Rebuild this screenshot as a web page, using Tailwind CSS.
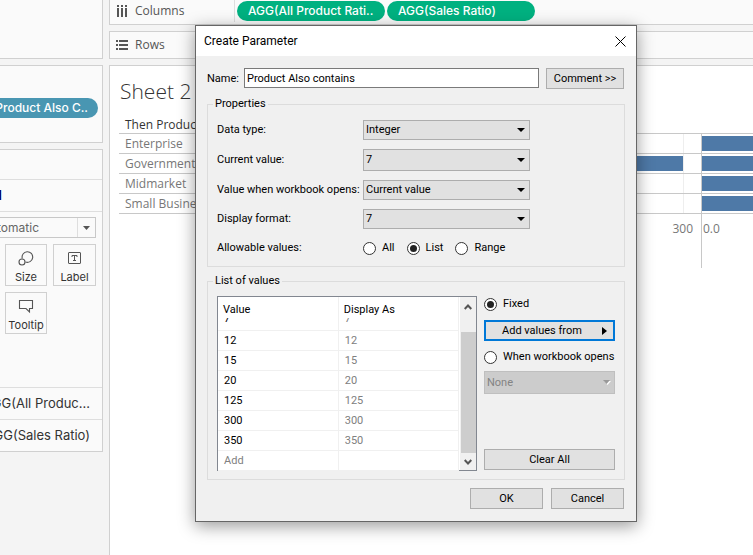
<!DOCTYPE html>
<html lang="en">
<head>
<meta charset="utf-8">
<title>Create Parameter</title>
<script src="https://cdn.jsdelivr.net/npm/@tailwindcss/browser@4"></script>
</head>
<body class="h-screen overflow-hidden bg-[#f4f4f4] font-['Open_Sans',sans-serif] text-[#333]">
<div class="flex h-full gap-1.5">
  <aside class="flex w-[103px] shrink-0 flex-col gap-1.5 overflow-hidden">
    <section class="h-[59px] shrink-0 border-r border-b border-[#d0d0d0] bg-[#fafafa]"></section>
    <section class="flex h-[78px] shrink-0 items-start justify-end border-y border-r border-[#d0d0d0] bg-[#fafafa] pt-8 pr-1">
      <button class="flex h-5 w-[120px] shrink-0 items-center justify-end rounded-full bg-[#4996b2] pr-2.5 font-['Inter',sans-serif] text-[12px] font-medium whitespace-nowrap text-white">Product Also C..</button>
    </section>
    <section class="flex shrink-0 flex-col border-y border-r border-[#d0d0d0] bg-[#fafafa] font-['Inter',sans-serif]">
      <div class="h-[30px] border-b border-[#dedede]"></div>
      <button class="flex h-8 items-center justify-end border-b border-[#dedede] pr-[100px] text-[13px] font-semibold whitespace-nowrap text-[#000060]">All</button>
      <div class="flex h-[175px] flex-col items-end gap-1.5 pt-[5px] pr-1.5">
        <button aria-label="Mark type" class="flex h-[21px] w-[120px] shrink-0 items-stretch justify-end border border-[#c8c8c8] text-[12px] text-[#666]">
          <span class="flex items-center pr-[38px] whitespace-nowrap">Automatic</span>
          <span class="flex w-[18px] shrink-0 items-center justify-center border-l border-[#dedede]"><svg class="h-1 w-[7px]" viewBox="0 0 7 4" fill="#555"><path d="M0 0h7L3.5 4z"/></svg></span>
        </button>
        <div class="grid grid-cols-[42px_43px] gap-x-1.5 gap-y-1.5 text-[11px] text-[#333]">
          <button class="flex h-[42px] flex-col items-center justify-between border border-[#d0d0d0] pt-1.5">
            <svg class="h-4 w-4" viewBox="0 0 16 16" fill="none" stroke="#555" stroke-width="1.1"><path d="M4.300 7.500A5.300 5.300 0 1 1 7.500 11"/><circle cx="4" cy="11" r="3"/></svg>
            <span>Size</span>
          </button>
          <button class="flex h-[42px] flex-col items-center justify-between border border-[#d0d0d0] pt-1.5">
            <svg class="h-4 w-4" viewBox="0 0 16 16" fill="none" stroke="#555"><rect x="1.5" y="1.5" width="12" height="11" rx=".5"/><path d="M5 6V4.500h5V6M7.500 4.500v5M6 9.500h3"/></svg>
            <span>Label</span>
          </button>
          <button class="flex h-[42px] flex-col items-center justify-between border border-[#d0d0d0] pt-1.5">
            <svg class="h-4 w-4" viewBox="0 0 16 16" fill="none" stroke="#555" stroke-width="1.1"><path d="M1.500 1.500h13v8h-3v3.500L8 9.500H1.500z"/></svg>
            <span>Tooltip</span>
          </button>
        </div>
      </div>
      <button class="flex h-8 items-center justify-end border-t border-[#dedede] pr-3 text-[13px] whitespace-nowrap">AGG(All Produc...</button>
      <button class="flex h-8 items-center justify-end border-t border-[#dedede] pr-3 text-[13px] whitespace-nowrap">AGG(Sales Ratio)</button>
    </section>
  </aside>

  <main class="flex min-w-0 flex-1 flex-col gap-1.5 text-[12px] text-[#555]">
    <section class="flex h-[25px] shrink-0 border-b border-l border-[#d0d0d0] bg-[#fafafa]">
      <h2 class="flex h-[22px] w-[125px] items-center gap-[7px] border-r border-[#dedede] pl-1.5">
        <svg class="h-3 w-3" viewBox="0 0 12 12" fill="#555"><path d="M1 0h2v2H1zM1 3h2v9H1zM5 0h2v2H5zM5 3h2v9H5zM9 0h2v2H9zM9 3h2v9H9z"/></svg>Columns</h2>
      <div class="flex gap-0.5 pt-px pl-0.5 text-[12px] font-medium text-white font-['Inter',sans-serif]">
        <button class="h-5 w-[148px] rounded-full bg-[#00b180] pl-[11px] text-left whitespace-nowrap">AGG(All Product Rati..</button>
        <button class="h-5 w-[148px] rounded-full bg-[#00b180] pl-[11px] text-left whitespace-nowrap">AGG(Sales Ratio)</button>
      </div>
    </section>
    <section class="flex h-7 shrink-0 border border-r-0 border-[#d0d0d0] bg-[#fafafa]">
      <h2 class="flex w-[125px] items-center gap-[7px] pl-1.5">
        <svg class="h-3 w-3" viewBox="0 0 12 12" fill="#555"><path d="M0 1h2v2H0zM3 1h9v2H3zM0 5h2v2H0zM3 5h9v2H3zM0 9h2v2H0zM3 9h9v2H3z"/></svg>Rows</h2>
    </section>
    <section class="flex-1 border-t border-l border-[#d0d0d0] bg-white pt-2.5 pl-[9px]">
      <h1 class="pl-px text-[21px] leading-[30px] font-light text-[#333]">Sheet 2</h1>
      <div class="mt-2.5 flex">
        <div class="w-[582px] shrink-0">
          <h3 class="h-[18px] border-b border-[#c8c8c8] pl-1.5 text-[12px] leading-[18px] font-medium text-[#333]">Then Product</h3>
          <div class="flex h-5 border-b border-[#c8c8c8] text-[12px] leading-5 text-[#777]"><span class="flex-1 pl-1.5">Enterprise</span><span class="mr-[17px] h-full border-r border-[#eee]"></span></div>
          <div class="flex h-5 border-b border-[#c8c8c8] text-[12px] leading-5 text-[#777]"><span class="w-[100px] pl-1.5">Government</span><span class="mt-0.5 h-[15px] flex-1 bg-[#4e79a7]"></span><span class="mr-[17px] h-full border-r border-[#eee]"></span></div>
          <div class="flex h-5 border-b border-[#c8c8c8] text-[12px] leading-5 text-[#777]"><span class="flex-1 pl-1.5">Midmarket</span><span class="mr-[17px] h-full border-r border-[#eee]"></span></div>
          <div class="flex h-5 border-b border-[#c8c8c8] text-[12px] leading-5 text-[#777]"><span class="flex-1 pl-1.5">Small Business</span><span class="mr-[17px] h-full border-r border-[#eee]"></span></div>
          <div class="pt-1.5 pr-2 text-right text-[12px] text-[#777]">300</div>
        </div>
        <div class="flex-1 pt-[17px]">
          <div class="h-[135px] border-t border-l border-[#c8c8c8]">
            <div class="h-5 border-b border-[#c8c8c8] pt-0.5"><div class="h-[15px] bg-[#4e79a7]"></div></div>
            <div class="h-5 border-b border-[#c8c8c8] pt-0.5"><div class="h-[15px] bg-[#4e79a7]"></div></div>
            <div class="h-5 border-b border-[#c8c8c8] pt-0.5"><div class="h-[15px] bg-[#4e79a7]"></div></div>
            <div class="h-5 border-b border-[#c8c8c8] pt-0.5"><div class="h-[15px] bg-[#4e79a7]"></div></div>
            <div class="pt-1.5 pl-px text-[12px] text-[#777]">0.0</div>
          </div>
        </div>
      </div>
    </section>
  </main>
</div>

<form role="dialog" aria-labelledby="dlg-title" class="absolute top-[25px] left-[195px] w-[442px] border border-[#666] bg-[#f0f0f0] font-[Roboto,sans-serif] text-[11px] leading-4 text-black shadow-[0_4px_16px_rgba(0,0,0,0.4)]">
  <header class="flex h-[30px] items-center justify-between bg-white pr-2.5 pl-2">
    <h2 id="dlg-title" class="text-[12px]">Create Parameter</h2>
    <button type="button" aria-label="Close"><svg class="size-[11px]" viewBox="0 0 11 11" fill="none" stroke="#000"><path d="M.5.5l10 10M10.500.5l-10 10"/></svg></button>
  </header>
  <div class="px-[11px] pt-3 pb-3">
    <div class="flex items-start pr-px">
      <label for="name" class="w-[37px] pt-[3px] whitespace-nowrap">Name:</label>
      <input id="name" value="Product Also contains" class="h-5 min-w-0 flex-1 border border-[#7a7a7a] bg-white px-0.5">
      <button type="button" class="ml-[7px] h-[21px] w-[78px] border border-[#adadad] bg-[#e1e1e1]">Comment &gt;&gt;</button>
    </div>

    <fieldset class="mt-[7px] h-[171px] min-w-0 border border-[#dcdcdc] px-[9px] pt-2">
      <legend class="-ml-1 px-0.5">Properties</legend>
      <div class="grid grid-cols-[146px_167px] items-center gap-y-[9px]">
        <label for="dtype" class="whitespace-nowrap">Data type:</label>
        <div class="relative"><select id="dtype" class="block h-5 w-full appearance-none border border-[#adadad] bg-[#e1e1e1] px-0.5"><option>Integer</option></select><svg class="pointer-events-none absolute top-2 right-[5px] h-1 w-2" viewBox="0 0 8 4"><path d="M0 0h8L4 4z"/></svg></div>
        <label for="cur" class="whitespace-nowrap">Current value:</label>
        <div class="relative"><select id="cur" class="block h-[22px] w-full appearance-none border border-[#adadad] bg-[#e1e1e1] px-0.5"><option>7</option></select><svg class="pointer-events-none absolute top-[9px] right-[5px] h-1 w-2" viewBox="0 0 8 4"><path d="M0 0h8L4 4z"/></svg></div>
        <label for="open" class="whitespace-nowrap">Value when workbook opens:</label>
        <div class="relative"><select id="open" class="block h-5 w-full appearance-none border border-[#adadad] bg-[#e1e1e1] px-0.5"><option>Current value</option></select><svg class="pointer-events-none absolute top-2 right-[5px] h-1 w-2" viewBox="0 0 8 4"><path d="M0 0h8L4 4z"/></svg></div>
        <label for="fmt" class="whitespace-nowrap">Display format:</label>
        <div class="relative"><select id="fmt" class="block h-5 w-full appearance-none border border-[#adadad] bg-[#e1e1e1] px-0.5"><option>7</option></select><svg class="pointer-events-none absolute top-2 right-[5px] h-1 w-2" viewBox="0 0 8 4"><path d="M0 0h8L4 4z"/></svg></div>
        <span class="whitespace-nowrap">Allowable values:</span>
        <div class="flex h-5 items-center gap-3">
          <label class="flex items-center gap-1.5"><input type="radio" name="allow" class="grid size-[13px] appearance-none place-content-center rounded-full border border-[#333] bg-white before:size-[7px] before:rounded-full checked:before:bg-[#222]">All</label>
          <label class="flex items-center gap-1.5"><input type="radio" name="allow" checked class="grid size-[13px] appearance-none place-content-center rounded-full border border-[#333] bg-white before:size-[7px] before:rounded-full checked:before:bg-[#222]">List</label>
          <label class="flex items-center gap-1.5"><input type="radio" name="allow" class="grid size-[13px] appearance-none place-content-center rounded-full border border-[#333] bg-white before:size-[7px] before:rounded-full checked:before:bg-[#222]">Range</label>
        </div>
      </div>
    </fieldset>

    <fieldset class="mt-1.5 min-w-0 border border-[#dcdcdc] px-[9px] pt-[7px] pb-2">
      <legend class="-ml-1 px-0.5">List of values</legend>
      <div class="flex gap-[7px]">
        <div class="flex h-[175px] w-[260px] shrink-0 border border-[#828790] bg-white">
          <table class="w-[241px] table-fixed border-collapse text-left">
            <thead><tr class="h-[21px] align-bottom"><th class="border-r border-[#f0f0f0] p-0 pl-[5px] font-normal">Value</th><th class="border-r border-[#f0f0f0] p-0 pl-[5px] font-normal">Display As</th></tr></thead>
            <tbody>
              <tr class="h-3 border-b border-[#f0f0f0]"><td class="border-r border-[#f0f0f0] p-0 pl-1.5"><div class="flex h-[11px] items-end overflow-hidden pb-0.5">7</div></td><td class="border-r border-[#f0f0f0] p-0 pl-1.5 text-[#808080]"><div class="flex h-[11px] items-end overflow-hidden pb-0.5">7</div></td></tr>
              <tr class="h-5 border-b border-[#f0f0f0]"><td class="border-r border-[#f0f0f0] p-0 pt-0.5 pl-1.5">12</td><td class="border-r border-[#f0f0f0] p-0 pt-0.5 pl-1.5 text-[#808080]">12</td></tr>
              <tr class="h-5 border-b border-[#f0f0f0]"><td class="border-r border-[#f0f0f0] p-0 pt-0.5 pl-1.5">15</td><td class="border-r border-[#f0f0f0] p-0 pt-0.5 pl-1.5 text-[#808080]">15</td></tr>
              <tr class="h-5 border-b border-[#f0f0f0]"><td class="border-r border-[#f0f0f0] p-0 pt-0.5 pl-1.5">20</td><td class="border-r border-[#f0f0f0] p-0 pt-0.5 pl-1.5 text-[#808080]">20</td></tr>
              <tr class="h-5 border-b border-[#f0f0f0]"><td class="border-r border-[#f0f0f0] p-0 pt-0.5 pl-1.5">125</td><td class="border-r border-[#f0f0f0] p-0 pt-0.5 pl-1.5 text-[#808080]">125</td></tr>
              <tr class="h-5 border-b border-[#f0f0f0]"><td class="border-r border-[#f0f0f0] p-0 pt-0.5 pl-1.5">300</td><td class="border-r border-[#f0f0f0] p-0 pt-0.5 pl-1.5 text-[#808080]">300</td></tr>
              <tr class="h-5 border-b border-[#f0f0f0]"><td class="border-r border-[#f0f0f0] p-0 pt-0.5 pl-1.5">350</td><td class="border-r border-[#f0f0f0] p-0 pt-0.5 pl-1.5 text-[#808080]">350</td></tr>
              <tr class="h-5 border-b border-[#f0f0f0]"><td class="border-r border-[#f0f0f0] p-0 pt-0.5 pl-1.5 text-[#808080]">Add</td><td class="border-r border-[#f0f0f0] p-0"></td></tr>
            </tbody>
          </table>
          <div class="ml-px flex flex-1 flex-col items-center bg-[#f0f0f0]">
            <svg class="h-[35px] w-2 shrink-0" viewBox="0 0 8 35" fill="none" stroke="#555" stroke-width="2"><path d="M.7 12L4 8.500 7.300 12"/></svg>
            <div class="w-[15px] flex-1 bg-[#cdcdcd]"></div>
            <svg class="h-[17px] w-2 shrink-0" viewBox="0 0 8 17" fill="none" stroke="#555" stroke-width="2"><path d="M.7 7L4 10.500 7.300 7"/></svg>
          </div>
        </div>
        <div class="flex min-w-0 flex-1 flex-col">
          <label class="flex items-center gap-1.5"><input type="radio" name="src" checked class="grid size-[13px] appearance-none place-content-center rounded-full border border-[#333] bg-white before:size-[7px] before:rounded-full checked:before:bg-[#222]">Fixed</label>
          <button type="button" class="mt-2 flex h-[21px] items-center justify-between border-2 border-[#0078d7] bg-[#e1e1e1] pr-1.5 pl-4">Add values from<svg class="h-2 w-[5px]" viewBox="0 0 5 8"><path d="M0 0v8l5-4z"/></svg></button>
          <label class="mt-2 flex items-center gap-1.5 whitespace-nowrap"><input type="radio" name="src" class="grid size-[13px] appearance-none place-content-center rounded-full border border-[#333] bg-white before:size-[7px] before:rounded-full checked:before:bg-[#222]">When workbook opens</label>
          <div class="relative mt-1.5"><select aria-label="Workbook source" disabled class="block h-[23px] w-full appearance-none border border-[#bfbfbf] bg-[#ccc] px-0.5 text-[#838383] opacity-100"><option>None</option></select><svg class="pointer-events-none absolute top-[9px] right-1 h-[5px] w-2" viewBox="0 0 8 5"><path d="M1 1h7L4.500 5z" fill="#fff"/><path d="M0 0h7L3.500 4z" fill="#999"/></svg></div>
          <button type="button" class="mt-auto mb-px h-[21px] border border-[#adadad] bg-[#e1e1e1]">Clear All</button>
        </div>
      </div>
    </fieldset>

    <div class="mt-2 flex justify-end gap-2 pr-px">
      <button type="submit" class="h-[21px] w-[73px] border border-[#adadad] bg-[#e1e1e1]">OK</button>
      <button type="button" class="h-[21px] w-[73px] border border-[#adadad] bg-[#e1e1e1]">Cancel</button>
    </div>
  </div>
</form>
</body>
</html>
